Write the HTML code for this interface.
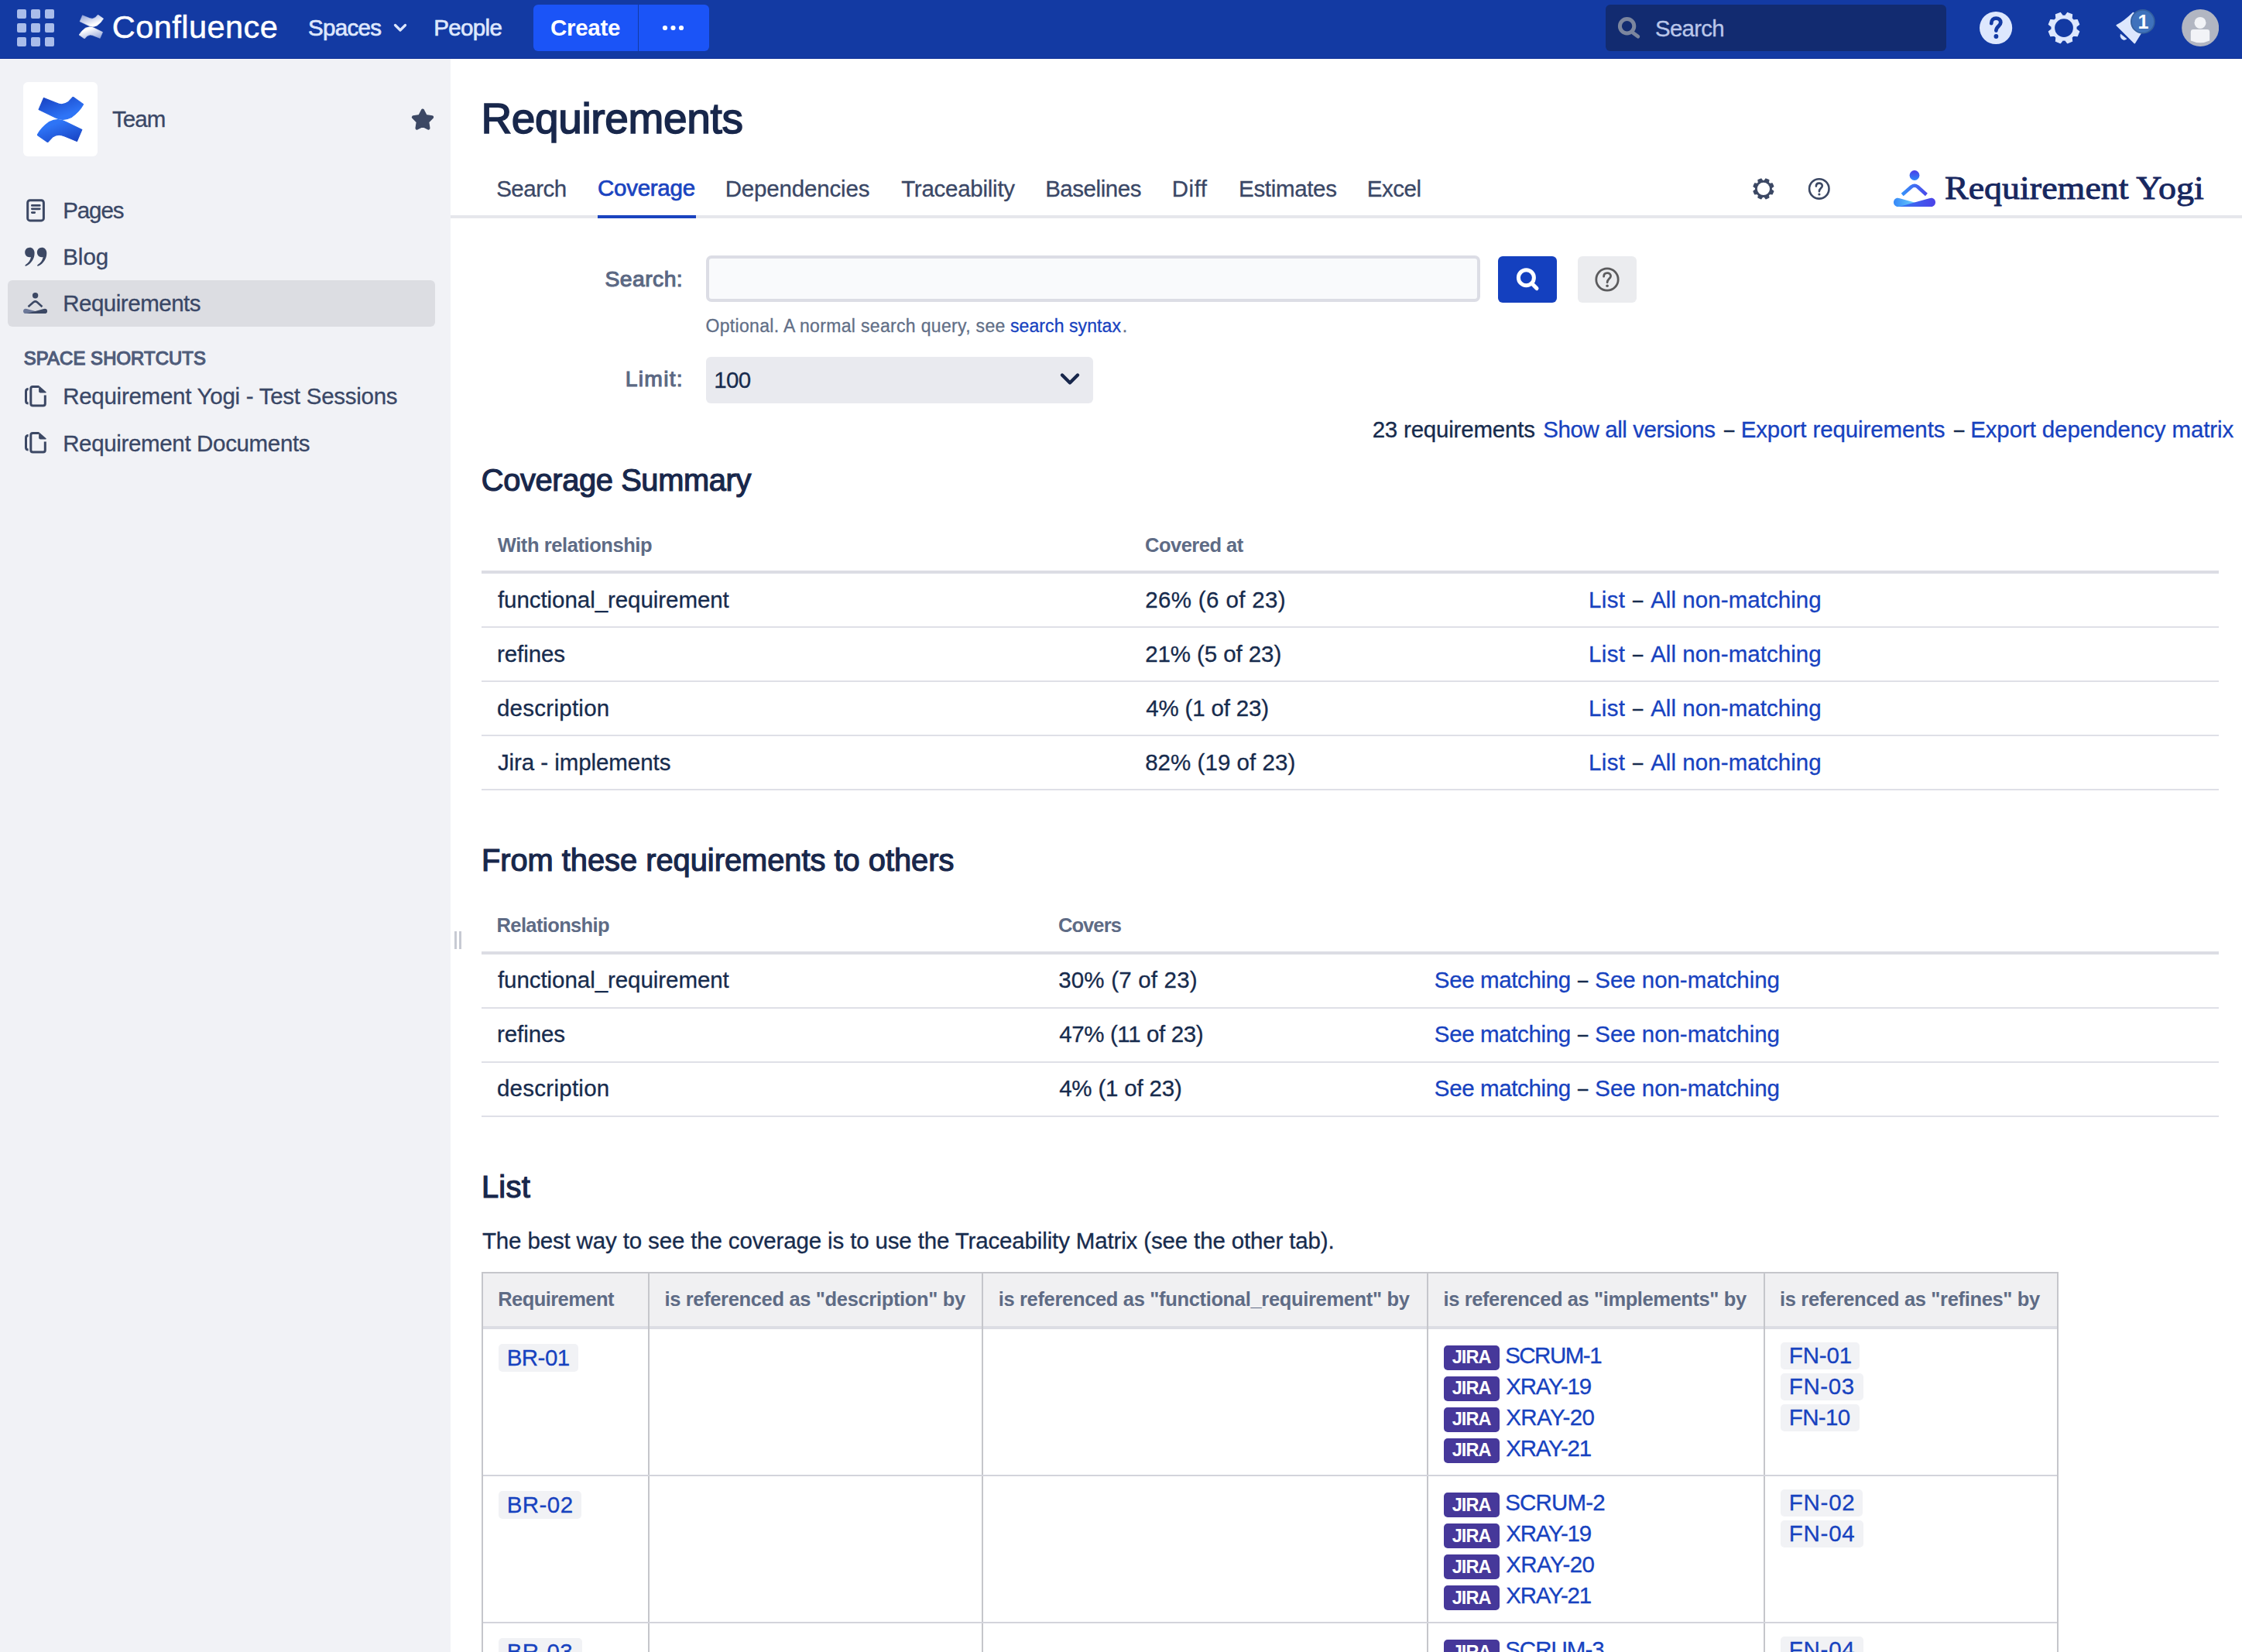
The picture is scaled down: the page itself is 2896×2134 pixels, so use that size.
<!DOCTYPE html>
<html lang="en"><head><meta charset="utf-8"><title>Requirements - Coverage - Confluence</title>
<style>
html,body{margin:0;padding:0;}
body{width:2896px;height:2134px;overflow:hidden;position:relative;background:#fff;font-family:"Liberation Sans",sans-serif;}
.b{position:absolute;box-sizing:border-box;display:block;}
.t{position:absolute;white-space:pre;line-height:1;margin:0;padding:0;font-weight:400;}
a{text-decoration:none;}
</style></head>
<body>
<div class="b" style="left:0px;top:0px;width:2896px;height:76px;background:#133AA3;border-bottom:1px solid #0B2C95;"></div>
<svg class="b" style="left:22px;top:12px;" width="48" height="48" viewBox="0 0 48 48"><rect x="0" y="0" width="12" height="12" rx="2" fill="#A9BCEA"/><rect x="18" y="0" width="12" height="12" rx="2" fill="#A9BCEA"/><rect x="36" y="0" width="12" height="12" rx="2" fill="#A9BCEA"/><rect x="0" y="18" width="12" height="12" rx="2" fill="#A9BCEA"/><rect x="18" y="18" width="12" height="12" rx="2" fill="#A9BCEA"/><rect x="36" y="18" width="12" height="12" rx="2" fill="#A9BCEA"/><rect x="0" y="36" width="12" height="12" rx="2" fill="#A9BCEA"/><rect x="18" y="36" width="12" height="12" rx="2" fill="#A9BCEA"/><rect x="36" y="36" width="12" height="12" rx="2" fill="#A9BCEA"/></svg>
<svg class="b" style="left:101.8px;top:18.9px;" width="32.0" height="31.4" viewBox="0 0 32 31.4"><defs><linearGradient id="cla" x1="0.05" y1="0" x2="0.62" y2="0.8"><stop offset="0" stop-color="#8B9ED6"/><stop offset="1" stop-color="#FFFFFF"/></linearGradient><linearGradient id="clb" x1="0.9" y1="1" x2="0.25" y2="0.15"><stop offset="0" stop-color="#8B9ED6"/><stop offset="1" stop-color="#FFFFFF"/></linearGradient></defs><path d="M4.5,0.8 L13.2,4.3 Q17.5,6.3 21.2,3.6 L24.5,0.1 L31.6,5.1 Q29,10 23.4,14 Q17.5,17 12.3,14.1 L1.1,8.7 Z" fill="url(#cla)" stroke="url(#cla)" stroke-width="0.6" stroke-linejoin="round"/><path d="M4.5,0.8 L13.2,4.3 Q17.5,6.3 21.2,3.6 L24.5,0.1 L31.6,5.1 Q29,10 23.4,14 Q17.5,17 12.3,14.1 L1.1,8.7 Z" transform="rotate(180 15.85 15.6)" fill="url(#cla)" stroke="url(#cla)" stroke-width="0.6" stroke-linejoin="round"/></svg>
<svg class="b" style="left:507px;top:28px;" width="20" height="16" viewBox="0 0 20 16"><path d="M3.5,4.5 L10,11 L16.5,4.5" fill="none" stroke="#DEE7FC" stroke-width="3.2" stroke-linecap="round" stroke-linejoin="round"/></svg>
<div class="b" style="left:689px;top:6px;width:135px;height:60px;background:#1B54F7;border-radius:6px 0 0 6px;"></div>
<div class="b" style="left:825px;top:6px;width:91px;height:60px;background:#1B54F7;border-radius:0 6px 6px 0;"></div>
<svg class="b" style="left:853px;top:30px;" width="34" height="12" viewBox="0 0 34 12"><circle cx="6" cy="6" r="3.1" fill="#fff"/><circle cx="16.5" cy="6" r="3.1" fill="#fff"/><circle cx="27" cy="6" r="3.1" fill="#fff"/></svg>
<div class="b" style="left:2074px;top:6px;width:440px;height:60px;background:#122B70;border-radius:6px;"></div>
<svg class="b" style="left:2086px;top:18px;" width="36" height="36" viewBox="0 0 36 36"><circle cx="15.6" cy="15.7" r="9.2" fill="none" stroke="#7C869E" stroke-width="5"/><path d="M23.3,24.3 L29.8,29.2" stroke="#7C869E" stroke-width="4.8" stroke-linecap="round"/></svg>
<svg class="b" style="left:2556px;top:14px;" width="44" height="44" viewBox="0 0 44 44"><circle cx="22.1" cy="22" r="21.1" fill="#DDE7FD"/><path d="M16.2,16.2 C16.2,11.5 19,9.6 22.3,9.6 C25.8,9.6 28.3,11.8 28.3,15 C28.3,19.5 22.4,20 22.4,25.6" fill="none" stroke="#133AA3" stroke-width="4.8" stroke-linecap="round"/><circle cx="22.4" cy="33" r="2.9" fill="#133AA3"/></svg>
<svg class="b" style="left:2644px;top:14px;" width="44" height="44" viewBox="0 0 44 44"><path d="M23.63,6.28 L26.66,2.44 L32.60,4.91 L32.03,9.76 L34.34,12.07 L39.19,11.50 L41.66,17.44 L37.82,20.47 L37.82,23.73 L41.66,26.76 L39.19,32.70 L34.34,32.13 L32.03,34.44 L32.60,39.29 L26.66,41.76 L23.63,37.92 L20.37,37.92 L17.34,41.76 L11.40,39.29 L11.97,34.44 L9.66,32.13 L4.81,32.70 L2.34,26.76 L6.18,23.73 L6.18,20.47 L2.34,17.44 L4.81,11.50 L9.66,12.07 L11.97,9.76 L11.40,4.91 L17.34,2.44 L20.37,6.28Z" fill="#DDE7FD" stroke="#DDE7FD" stroke-width="1.2" stroke-linejoin="round"/><circle cx="22" cy="22.1" r="16.2" fill="#DDE7FD"/><circle cx="22" cy="22.1" r="11.9" fill="#133AA3"/></svg>
<svg class="b" style="left:2728px;top:8px;" width="64" height="60" viewBox="0 0 64 60"><path d="M6.2,24.8 Q16,19.8 27.5,8.5 L42,27 L29.3,47.6 Z" fill="#DDE7FD" stroke="#DDE7FD" stroke-width="1.6" stroke-linejoin="round"/><path d="M11.3,36.2 L18.9,42.3 Q15,44.8 12.5,42 Q10.2,39.2 11.3,36.2 Z" fill="#DDE7FD" stroke="#DDE7FD" stroke-width="0.8" stroke-linejoin="round"/><circle cx="39.85" cy="19.9" r="15" fill="#3F72BC" stroke="#35619F" stroke-width="1.7"/></svg>
<svg class="b" style="left:2818px;top:12px;" width="48" height="48" viewBox="0 0 48 48"><defs><clipPath id="avc"><circle cx="24.2" cy="24" r="24"/></clipPath></defs><circle cx="24.2" cy="24" r="24" fill="#B2B6C2"/><g clip-path="url(#avc)"><circle cx="24" cy="17.4" r="7.5" fill="#F2F3F7"/><path d="M11.8,29.5 Q11.8,26.1 15.2,26.1 L32.8,26.1 Q36.2,26.1 36.2,29.5 L36.2,40.5 Q24,46 11.8,40.5 Z" fill="#F2F3F7"/></g></svg>
<div class="b" style="left:0px;top:76px;width:582px;height:2058px;background:#F1F2F6;"></div>
<div class="b" style="left:30px;top:106px;width:96px;height:96px;background:#FFFFFF;border-radius:6px;"></div>
<svg class="b" style="left:48px;top:124.5px;" width="60.48" height="59.35" viewBox="0 0 32 31.4"><defs><linearGradient id="csa" x1="0.05" y1="0" x2="0.62" y2="0.8"><stop offset="0" stop-color="#1740C0"/><stop offset="1" stop-color="#2E74F6"/></linearGradient><linearGradient id="csb" x1="0.9" y1="1" x2="0.25" y2="0.15"><stop offset="0" stop-color="#1740C0"/><stop offset="1" stop-color="#2E74F6"/></linearGradient></defs><path d="M4.5,0.8 L13.2,4.3 Q17.5,6.3 21.2,3.6 L24.5,0.1 L31.6,5.1 Q29,10 23.4,14 Q17.5,17 12.3,14.1 L1.1,8.7 Z" fill="url(#csa)" stroke="url(#csa)" stroke-width="0.6" stroke-linejoin="round"/><path d="M4.5,0.8 L13.2,4.3 Q17.5,6.3 21.2,3.6 L24.5,0.1 L31.6,5.1 Q29,10 23.4,14 Q17.5,17 12.3,14.1 L1.1,8.7 Z" transform="rotate(180 15.85 15.6)" fill="url(#csa)" stroke="url(#csa)" stroke-width="0.6" stroke-linejoin="round"/></svg>
<svg class="b" style="left:528px;top:136px;" width="36" height="36" viewBox="0 0 36 36"><polygon points="18.00,6.50 21.88,13.96 30.17,15.34 24.28,21.34 25.52,29.66 18.00,25.90 10.48,29.66 11.72,21.34 5.83,15.34 14.12,13.96" fill="#3C4864" stroke="#3C4864" stroke-width="4" stroke-linejoin="round"/></svg>
<svg class="b" style="left:32px;top:255px;" width="28" height="34" viewBox="0 0 28 34"><rect x="3.7" y="3.7" width="20.7" height="26.2" rx="3" fill="none" stroke="#3C4864" stroke-width="3"/><path d="M9.3,10.4 H19.3 M9.3,14.8 H19.3 M9.3,19.6 H12.8" stroke="#3C4864" stroke-width="2.7" stroke-linecap="round"/></svg>
<svg class="b" style="left:30px;top:318px;" width="34" height="28" viewBox="0 0 34 28"><path d="M6.3,0 C9.9,0 12.6,2.7 12.6,7.2 C12.6,14.5 8.5,20.5 2,23.8 C0.7,24.4 -0.2,22.8 1,22.1 C4.8,19.6 7.2,16.6 8,12.2 C7.5,12.4 6.9,12.5 6.3,12.5 C2.8,12.5 0.2,9.8 0.2,6.3 C0.2,2.8 2.8,0 6.3,0 Z" transform="translate(2,1.8)" fill="#3C4864"/><path d="M6.3,0 C9.9,0 12.6,2.7 12.6,7.2 C12.6,14.5 8.5,20.5 2,23.8 C0.7,24.4 -0.2,22.8 1,22.1 C4.8,19.6 7.2,16.6 8,12.2 C7.5,12.4 6.9,12.5 6.3,12.5 C2.8,12.5 0.2,9.8 0.2,6.3 C0.2,2.8 2.8,0 6.3,0 Z" transform="translate(17.7,1.8)" fill="#3C4864"/></svg>
<div class="b" style="left:10px;top:362px;width:552px;height:60px;background:#DCDDE2;border-radius:6px;"></div>
<svg class="b" style="left:30px;top:377.7px;" width="31.21" height="27.17" viewBox="0 0 54 47"><circle cx="27" cy="6.5" r="6.4" fill="#3C4864"/><path d="M11.2,31.5 L23,21.3 Q27,18.3 31,21.3 L42.4,31.5" fill="none" stroke="#3C4864" stroke-width="4.5" stroke-linejoin="round"/><path d="M5.5,35.8 C2,35.8 0,38.5 0,41.4 C0,44.3 2.3,46.9 5.5,46.9 L47,46.9 L8,36.2 Q6.5,35.8 5.5,35.8 Z" fill="#6C7898"/><path d="M48.5,35.8 C52,35.8 54,38.5 54,41.4 C54,44.3 51.7,46.9 48.5,46.9 L7,46.9 L46,36.2 Q47.5,35.8 48.5,35.8 Z" fill="#3C4864"/></svg>
<svg class="b" style="left:30px;top:496.5px;" width="32" height="32" viewBox="0 0 32 32"><path d="M20,2.5 H12.3 Q9.8,2.5 9.8,5 V24.6 Q9.8,27.1 12.3,27.1 H25.8 Q28.3,27.1 28.3,24.6 V13.5" fill="none" stroke="#3C4864" stroke-width="3" stroke-linejoin="round"/><path d="M20.1,1 L29.8,9.6 Q29.8,10.5 28.9,10.5 H22.3 Q20.1,10.5 20.1,8.3 Z" fill="#3C4864"/><path d="M6.6,5.6 Q3.5,5.6 3.5,8.7 V20.9 Q3.5,24 6.6,24" fill="none" stroke="#3C4864" stroke-width="3"/></svg>
<svg class="b" style="left:30px;top:556.5px;" width="32" height="32" viewBox="0 0 32 32"><path d="M20,2.5 H12.3 Q9.8,2.5 9.8,5 V24.6 Q9.8,27.1 12.3,27.1 H25.8 Q28.3,27.1 28.3,24.6 V13.5" fill="none" stroke="#3C4864" stroke-width="3" stroke-linejoin="round"/><path d="M20.1,1 L29.8,9.6 Q29.8,10.5 28.9,10.5 H22.3 Q20.1,10.5 20.1,8.3 Z" fill="#3C4864"/><path d="M6.6,5.6 Q3.5,5.6 3.5,8.7 V20.9 Q3.5,24 6.6,24" fill="none" stroke="#3C4864" stroke-width="3"/></svg>
<div class="b" style="left:587px;top:1203px;width:3px;height:23px;background:#C7CAD3;"></div>
<div class="b" style="left:593px;top:1203px;width:3px;height:23px;background:#C7CAD3;"></div>
<div class="b" style="left:582px;top:278px;width:2314px;height:4px;background:#E6E7EC;"></div>
<div class="b" style="left:772px;top:278px;width:127px;height:4px;background:#1A43BF;"></div>
<svg class="b" style="left:2262px;top:228px;" width="32" height="32" viewBox="0 0 32 32"><path d="M16.96,5.65 L18.97,2.96 L22.88,4.58 L22.40,7.91 L23.89,9.40 L27.22,8.92 L28.84,12.83 L26.15,14.84 L26.15,16.96 L28.84,18.97 L27.22,22.88 L23.89,22.40 L22.40,23.89 L22.88,27.22 L18.97,28.84 L16.96,26.15 L14.84,26.15 L12.83,28.84 L8.92,27.22 L9.40,23.89 L7.91,22.40 L4.58,22.88 L2.96,18.97 L5.65,16.96 L5.65,14.84 L2.96,12.83 L4.58,8.92 L7.91,9.40 L9.40,7.91 L8.92,4.58 L12.83,2.96 L14.84,5.65Z" fill="#3C4864" stroke="#3C4864" stroke-width="1.2" stroke-linejoin="round"/><circle cx="15.9" cy="15.9" r="10.6" fill="#3C4864"/><circle cx="15.9" cy="15.9" r="8.1" fill="#FFFFFF"/></svg>
<svg class="b" style="left:2334px;top:228px;" width="32" height="32" viewBox="0 0 32 32"><circle cx="15.8" cy="15.9" r="12.7" fill="none" stroke="#3C4864" stroke-width="2.6"/><path d="M11.9,12.6 C11.9,9.8 13.8,8.6 15.9,8.6 C18.1,8.6 19.8,10 19.8,12 C19.8,14.9 15.9,15.3 15.9,19.2" fill="none" stroke="#3C4864" stroke-width="2.6" stroke-linecap="round"/><circle cx="15.9" cy="23" r="1.6" fill="#3C4864"/></svg>
<svg class="b" style="left:2446px;top:220px;" width="54.0" height="47.0" viewBox="0 0 54 47"><defs><linearGradient id="ylh" x1="0" y1="0" x2="0" y2="1"><stop offset="0" stop-color="#4B3DE8"/><stop offset="1" stop-color="#2E86F8"/></linearGradient><linearGradient id="yla" x1="0" y1="0" x2="1" y2="0"><stop offset="0" stop-color="#3691F9"/><stop offset="1" stop-color="#4B4AEA"/></linearGradient><linearGradient id="yll" x1="0" y1="0" x2="1" y2="0"><stop offset="0" stop-color="#3587F8"/><stop offset="0.75" stop-color="#7BE3FC"/></linearGradient><linearGradient id="ylr" x1="0" y1="0" x2="1" y2="0"><stop offset="0" stop-color="#3578F4"/><stop offset="1" stop-color="#4C42E8"/></linearGradient></defs><circle cx="27" cy="6.5" r="6.4" fill="url(#ylh)"/><path d="M11.2,31.5 L23,21.3 Q27,18.3 31,21.3 L42.4,31.5" fill="none" stroke="url(#yla)" stroke-width="4.5" stroke-linejoin="round"/><path d="M5.5,35.8 C2,35.8 0,38.5 0,41.4 C0,44.3 2.3,46.9 5.5,46.9 L47,46.9 L8,36.2 Q6.5,35.8 5.5,35.8 Z" fill="url(#yll)"/><path d="M48.5,35.8 C52,35.8 54,38.5 54,41.4 C54,44.3 51.7,46.9 48.5,46.9 L7,46.9 L46,36.2 Q47.5,35.8 48.5,35.8 Z" fill="url(#ylr)"/></svg>
<div class="b" style="left:912px;top:330px;width:1000px;height:60px;background:#F9FAFC;border-radius:7px;border:4px solid #DCDDE5;"></div>
<div class="b" style="left:1935px;top:331px;width:76px;height:60px;background:#1440BF;border-radius:6px;"></div>
<svg class="b" style="left:1955px;top:343px;" width="36" height="36" viewBox="0 0 36 36"><circle cx="16.4" cy="15.7" r="10" fill="none" stroke="#fff" stroke-width="5"/><path d="M23.8,23.2 L30,29.6" stroke="#fff" stroke-width="5" stroke-linecap="round"/></svg>
<div class="b" style="left:2038px;top:331px;width:76px;height:60px;background:#EBECEF;border-radius:6px;"></div>
<svg class="b" style="left:2058px;top:343px;" width="36" height="36" viewBox="0 0 36 36"><circle cx="18" cy="18" r="14.2" fill="none" stroke="#5B5B5D" stroke-width="2.8"/><path d="M13.6,14.2 C13.6,11 15.7,9.6 18.1,9.6 C20.7,9.6 22.6,11.2 22.6,13.5 C22.6,16.9 18.1,17.4 18.1,21.8" fill="none" stroke="#5B5B5D" stroke-width="2.8" stroke-linecap="round"/><circle cx="18.1" cy="26.2" r="1.8" fill="#5B5B5D"/></svg>
<div class="b" style="left:912px;top:461px;width:500px;height:60px;background:#E9EAEF;border-radius:6px;"></div>
<svg class="b" style="left:1366px;top:478px;" width="32" height="24" viewBox="0 0 32 24"><path d="M6,6.5 L16,16.5 L26,6.5" fill="none" stroke="#18274B" stroke-width="4.4" stroke-linecap="round" stroke-linejoin="round"/></svg>
<div class="b" style="left:622px;top:737px;width:2244px;height:4px;background:#DCDDE4;"></div>
<div class="b" style="left:622px;top:809px;width:2244px;height:2px;background:#DFE0E7;"></div>
<div class="b" style="left:622px;top:879px;width:2244px;height:2px;background:#DFE0E7;"></div>
<div class="b" style="left:622px;top:949px;width:2244px;height:2px;background:#DFE0E7;"></div>
<div class="b" style="left:622px;top:1019px;width:2244px;height:2px;background:#DFE0E7;"></div>
<div class="b" style="left:622px;top:1229px;width:2244px;height:4px;background:#DCDDE4;"></div>
<div class="b" style="left:622px;top:1301px;width:2244px;height:2px;background:#DFE0E7;"></div>
<div class="b" style="left:622px;top:1371px;width:2244px;height:2px;background:#DFE0E7;"></div>
<div class="b" style="left:622px;top:1441px;width:2244px;height:2px;background:#DFE0E7;"></div>
<div class="b" style="left:622px;top:1643px;width:2037px;height:491px;background:#FFFFFF;border:2px solid #C5C6CB;border-bottom:none;"></div>
<div class="b" style="left:624px;top:1645px;width:2033px;height:68px;background:#F0F0F2;"></div>
<div class="b" style="left:624px;top:1713px;width:2033px;height:4px;background:#DCDDE4;"></div>
<div class="b" style="left:837px;top:1645px;width:2px;height:489px;background:#C5C6CB;"></div>
<div class="b" style="left:1268px;top:1645px;width:2px;height:489px;background:#C5C6CB;"></div>
<div class="b" style="left:1843px;top:1645px;width:2px;height:489px;background:#C5C6CB;"></div>
<div class="b" style="left:2278px;top:1645px;width:2px;height:489px;background:#C5C6CB;"></div>
<div class="b" style="left:624px;top:1905px;width:2033px;height:2px;background:#D3D4DB;"></div>
<div class="b" style="left:624px;top:2095px;width:2033px;height:2px;background:#D3D4DB;"></div>
<div class="b" style="left:644px;top:1736px;width:103px;height:35.5px;background:#F1F2F5;border-radius:5px;"></div>
<div class="b" style="left:644px;top:1926px;width:106.6px;height:35.5px;background:#F1F2F5;border-radius:5px;"></div>
<div class="b" style="left:644px;top:2116px;width:107.5px;height:35.5px;background:#F1F2F5;border-radius:5px;"></div>
<div class="b" style="left:1865px;top:1738px;width:72px;height:32px;background:#46389A;border-radius:5px;"></div>
<div class="b" style="left:1865px;top:1778px;width:72px;height:32px;background:#46389A;border-radius:5px;"></div>
<div class="b" style="left:1865px;top:1818px;width:72px;height:32px;background:#46389A;border-radius:5px;"></div>
<div class="b" style="left:1865px;top:1858px;width:72px;height:32px;background:#46389A;border-radius:5px;"></div>
<div class="b" style="left:1865px;top:1928.3px;width:72px;height:32px;background:#46389A;border-radius:5px;"></div>
<div class="b" style="left:1865px;top:1968.3px;width:72px;height:32px;background:#46389A;border-radius:5px;"></div>
<div class="b" style="left:1865px;top:2008.3px;width:72px;height:32px;background:#46389A;border-radius:5px;"></div>
<div class="b" style="left:1865px;top:2048.3px;width:72px;height:32px;background:#46389A;border-radius:5px;"></div>
<div class="b" style="left:1865px;top:2118.3px;width:72px;height:32px;background:#46389A;border-radius:5px;"></div>
<div class="b" style="left:2300px;top:1733.5px;width:102px;height:35px;background:#F1F2F5;border-radius:5px;"></div>
<div class="b" style="left:2300px;top:1773.5px;width:107px;height:35px;background:#F1F2F5;border-radius:5px;"></div>
<div class="b" style="left:2300px;top:1813.5px;width:102px;height:35px;background:#F1F2F5;border-radius:5px;"></div>
<div class="b" style="left:2300px;top:1923.5px;width:106px;height:35px;background:#F1F2F5;border-radius:5px;"></div>
<div class="b" style="left:2300px;top:1963.5px;width:107px;height:35px;background:#F1F2F5;border-radius:5px;"></div>
<div class="b" style="left:2300px;top:2113.5px;width:107px;height:35px;background:#F1F2F5;border-radius:5px;"></div>
<span class="t" style="left:144.75px;top:14px;font-size:41.5px;color:#FFFFFF;letter-spacing:0.459px;-webkit-text-stroke:0.5px #FFFFFF;">Confluence</span>
<span class="t" style="left:398.10px;top:21px;font-size:29.5px;color:#DEE7FC;letter-spacing:-0.721px;-webkit-text-stroke:0.7px #DEE7FC;">Spaces</span>
<span class="t" style="left:560.35px;top:21px;font-size:29.5px;color:#DEE7FC;letter-spacing:-0.681px;-webkit-text-stroke:0.7px #DEE7FC;">People</span>
<span class="t" style="left:711.00px;top:21px;font-size:29.5px;color:#FFFFFF;font-weight:700;letter-spacing:-0.284px;">Create</span>
<span class="t" style="left:2138.05px;top:22px;font-size:29.5px;color:#BAC6E9;letter-spacing:-0.776px;-webkit-text-stroke:0.3px #BAC6E9;">Search</span>
<span class="t" style="left:2761.60px;top:16px;font-size:25px;color:#FFFFFF;font-weight:700;">1</span>
<span class="t" style="left:144.95px;top:139px;font-size:29.5px;color:#3A4766;letter-spacing:-0.889px;-webkit-text-stroke:0.3px #3A4766;">Team</span>
<span class="t" style="left:81.15px;top:257px;font-size:29.5px;color:#3A4766;letter-spacing:-1.052px;-webkit-text-stroke:0.3px #3A4766;">Pages</span>
<span class="t" style="left:81.15px;top:317px;font-size:29.5px;color:#3A4766;letter-spacing:0.020px;-webkit-text-stroke:0.3px #3A4766;">Blog</span>
<span class="t" style="left:81.15px;top:377px;font-size:29.5px;color:#3A4766;letter-spacing:-0.472px;-webkit-text-stroke:0.3px #3A4766;">Requirements</span>
<span class="t" style="left:30.82px;top:451px;font-size:23.8px;color:#4F5C7A;letter-spacing:0.132px;-webkit-text-stroke:1.25px #4F5C7A;">SPACE SHORTCUTS</span>
<span class="t" style="left:81.15px;top:497px;font-size:29.5px;color:#3A4766;letter-spacing:-0.262px;-webkit-text-stroke:0.3px #3A4766;">Requirement Yogi - Test Sessions</span>
<span class="t" style="left:81.15px;top:558px;font-size:29.5px;color:#3A4766;letter-spacing:-0.342px;-webkit-text-stroke:0.3px #3A4766;">Requirement Documents</span>
<h1 class="t" style="left:621.40px;top:126px;font-size:55px;color:#18274B;letter-spacing:-0.354px;-webkit-text-stroke:1.6px #18274B;">Requirements</h1>
<a href="#" class="t" style="left:641.15px;top:229px;font-size:29.5px;color:#3A4766;letter-spacing:-0.476px;-webkit-text-stroke:0.3px #3A4766;">Search</a>
<a href="#" class="t" style="left:772.05px;top:228px;font-size:29.5px;color:#1A43BF;letter-spacing:-0.274px;-webkit-text-stroke:0.7px #1A43BF;">Coverage</a>
<a href="#" class="t" style="left:936.65px;top:229px;font-size:29.5px;color:#3A4766;letter-spacing:-0.170px;-webkit-text-stroke:0.3px #3A4766;">Dependencies</a>
<a href="#" class="t" style="left:1164.15px;top:229px;font-size:29.5px;color:#3A4766;letter-spacing:-0.253px;-webkit-text-stroke:0.3px #3A4766;">Traceability</a>
<a href="#" class="t" style="left:1350.15px;top:229px;font-size:29.5px;color:#3A4766;letter-spacing:-0.459px;-webkit-text-stroke:0.3px #3A4766;">Baselines</a>
<a href="#" class="t" style="left:1513.75px;top:229px;font-size:29.5px;color:#3A4766;letter-spacing:0.526px;-webkit-text-stroke:0.3px #3A4766;">Diff</a>
<a href="#" class="t" style="left:1600.05px;top:229px;font-size:29.5px;color:#3A4766;letter-spacing:-0.333px;-webkit-text-stroke:0.3px #3A4766;">Estimates</a>
<a href="#" class="t" style="left:1765.85px;top:229px;font-size:29.5px;color:#3A4766;letter-spacing:-0.472px;-webkit-text-stroke:0.3px #3A4766;">Excel</a>
<span class="t" style="left:2511.70px;top:222px;font-size:42.5px;color:#17275F;font-family:'Liberation Serif',serif;transform:scaleX(1.0823);transform-origin:0 0;-webkit-text-stroke:0.9px #17275F;">Requirement Yogi</span>
<span class="t" style="left:781.45px;top:346px;font-size:28.3px;color:#5B6883;letter-spacing:0.455px;-webkit-text-stroke:1.1px #5B6883;">Search:</span>
<span class="t" style="left:911.45px;top:410px;font-size:23px;color:#626F87;letter-spacing:0.327px;-webkit-text-stroke:0.3px #626F87;">Optional. A normal search query, see</span>
<a href="#" class="t" style="left:1304.95px;top:410px;font-size:23px;color:#1742BF;letter-spacing:0.091px;-webkit-text-stroke:0.3px #1742BF;">search syntax</a>
<span class="t" style="left:1449.65px;top:410px;font-size:23px;color:#626F87;-webkit-text-stroke:0.3px #626F87;">.</span>
<span class="t" style="left:807.75px;top:475px;font-size:28.3px;color:#5B6883;letter-spacing:1.270px;-webkit-text-stroke:1.1px #5B6883;">Limit:</span>
<span class="t" style="left:922.15px;top:476px;font-size:29.5px;color:#172B4D;letter-spacing:-0.564px;-webkit-text-stroke:0.3px #172B4D;">100</span>
<span class="t" style="left:1772.65px;top:540px;font-size:29.5px;color:#172B4D;letter-spacing:-0.209px;-webkit-text-stroke:0.3px #172B4D;">23 requirements</span>
<a href="#" class="t" style="left:1993.35px;top:540px;font-size:29.5px;color:#1742BF;letter-spacing:-0.431px;-webkit-text-stroke:0.3px #1742BF;">Show all versions</a>
<span class="t" style="left:2227.12px;top:540px;font-size:29.5px;color:#172B4D;transform:scaleX(0.8085);transform-origin:0 0;-webkit-text-stroke:0.3px #172B4D;">–</span>
<a href="#" class="t" style="left:2248.65px;top:540px;font-size:29.5px;color:#1742BF;letter-spacing:-0.099px;-webkit-text-stroke:0.3px #1742BF;">Export requirements</a>
<span class="t" style="left:2523.92px;top:540px;font-size:29.5px;color:#172B4D;transform:scaleX(0.8085);transform-origin:0 0;-webkit-text-stroke:0.3px #172B4D;">–</span>
<a href="#" class="t" style="left:2545.15px;top:540px;font-size:29.5px;color:#1742BF;letter-spacing:-0.112px;-webkit-text-stroke:0.3px #1742BF;">Export dependency matrix</a>
<h2 class="t" style="left:621.80px;top:601px;font-size:39.8px;color:#18274B;letter-spacing:-0.359px;-webkit-text-stroke:1.2px #18274B;">Coverage Summary</h2>
<span class="t" style="left:642.80px;top:692px;font-size:25.5px;color:#5E6B85;font-weight:700;letter-spacing:-0.427px;">With relationship</span>
<span class="t" style="left:1479.00px;top:692px;font-size:25.5px;color:#5E6B85;font-weight:700;letter-spacing:-0.501px;">Covered at</span>
<span class="t" style="left:642.95px;top:760px;font-size:29.5px;color:#172B4D;letter-spacing:-0.058px;-webkit-text-stroke:0.3px #172B4D;">functional_requirement</span>
<span class="t" style="left:1479.15px;top:760px;font-size:29.5px;color:#172B4D;letter-spacing:0.368px;-webkit-text-stroke:0.3px #172B4D;">26% (6 of 23)</span>
<a href="#" class="t" style="left:2052.05px;top:760px;font-size:29.5px;color:#1742BF;letter-spacing:0.358px;-webkit-text-stroke:0.3px #1742BF;">List</a>
<span class="t" style="left:2108.62px;top:760px;font-size:29.5px;color:#172B4D;transform:scaleX(0.8085);transform-origin:0 0;-webkit-text-stroke:0.3px #172B4D;">–</span>
<a href="#" class="t" style="left:2132.15px;top:760px;font-size:29.5px;color:#1742BF;letter-spacing:0.058px;-webkit-text-stroke:0.3px #1742BF;">All non-matching</a>
<span class="t" style="left:641.95px;top:830px;font-size:29.5px;color:#172B4D;letter-spacing:-0.066px;-webkit-text-stroke:0.3px #172B4D;">refines</span>
<span class="t" style="left:1479.15px;top:830px;font-size:29.5px;color:#172B4D;letter-spacing:-0.082px;-webkit-text-stroke:0.3px #172B4D;">21% (5 of 23)</span>
<a href="#" class="t" style="left:2052.05px;top:830px;font-size:29.5px;color:#1742BF;letter-spacing:0.358px;-webkit-text-stroke:0.3px #1742BF;">List</a>
<span class="t" style="left:2108.62px;top:830px;font-size:29.5px;color:#172B4D;transform:scaleX(0.8085);transform-origin:0 0;-webkit-text-stroke:0.3px #172B4D;">–</span>
<a href="#" class="t" style="left:2132.15px;top:830px;font-size:29.5px;color:#1742BF;letter-spacing:0.058px;-webkit-text-stroke:0.3px #1742BF;">All non-matching</a>
<span class="t" style="left:641.95px;top:900px;font-size:29.5px;color:#172B4D;letter-spacing:0.263px;-webkit-text-stroke:0.3px #172B4D;">description</span>
<span class="t" style="left:1480.15px;top:900px;font-size:29.5px;color:#172B4D;letter-spacing:-0.153px;-webkit-text-stroke:0.3px #172B4D;">4% (1 of 23)</span>
<a href="#" class="t" style="left:2052.05px;top:900px;font-size:29.5px;color:#1742BF;letter-spacing:0.358px;-webkit-text-stroke:0.3px #1742BF;">List</a>
<span class="t" style="left:2108.62px;top:900px;font-size:29.5px;color:#172B4D;transform:scaleX(0.8085);transform-origin:0 0;-webkit-text-stroke:0.3px #172B4D;">–</span>
<a href="#" class="t" style="left:2132.15px;top:900px;font-size:29.5px;color:#1742BF;letter-spacing:0.058px;-webkit-text-stroke:0.3px #1742BF;">All non-matching</a>
<span class="t" style="left:642.95px;top:970px;font-size:29.5px;color:#172B4D;letter-spacing:-0.071px;-webkit-text-stroke:0.3px #172B4D;">Jira - implements</span>
<span class="t" style="left:1479.15px;top:970px;font-size:29.5px;color:#172B4D;letter-spacing:0.047px;-webkit-text-stroke:0.3px #172B4D;">82% (19 of 23)</span>
<a href="#" class="t" style="left:2052.05px;top:970px;font-size:29.5px;color:#1742BF;letter-spacing:0.358px;-webkit-text-stroke:0.3px #1742BF;">List</a>
<span class="t" style="left:2108.62px;top:970px;font-size:29.5px;color:#172B4D;transform:scaleX(0.8085);transform-origin:0 0;-webkit-text-stroke:0.3px #172B4D;">–</span>
<a href="#" class="t" style="left:2132.15px;top:970px;font-size:29.5px;color:#1742BF;letter-spacing:0.058px;-webkit-text-stroke:0.3px #1742BF;">All non-matching</a>
<h2 class="t" style="left:621.90px;top:1092px;font-size:39.8px;color:#18274B;-webkit-text-stroke:1.2px #18274B;">From these requirements to others</h2>
<span class="t" style="left:641.60px;top:1183px;font-size:25.5px;color:#5E6B85;font-weight:700;letter-spacing:-0.640px;">Relationship</span>
<span class="t" style="left:1366.90px;top:1183px;font-size:25.5px;color:#5E6B85;font-weight:700;letter-spacing:-0.897px;">Covers</span>
<span class="t" style="left:642.95px;top:1251px;font-size:29.5px;color:#172B4D;letter-spacing:-0.058px;-webkit-text-stroke:0.3px #172B4D;">functional_requirement</span>
<span class="t" style="left:1367.15px;top:1251px;font-size:29.5px;color:#172B4D;letter-spacing:0.201px;-webkit-text-stroke:0.3px #172B4D;">30% (7 of 23)</span>
<a href="#" class="t" style="left:1852.85px;top:1251px;font-size:29.5px;color:#1742BF;letter-spacing:-0.371px;-webkit-text-stroke:0.3px #1742BF;">See matching</a>
<span class="t" style="left:2038.12px;top:1251px;font-size:29.5px;color:#172B4D;transform:scaleX(0.8085);transform-origin:0 0;-webkit-text-stroke:0.3px #172B4D;">–</span>
<a href="#" class="t" style="left:2060.35px;top:1251px;font-size:29.5px;color:#1742BF;letter-spacing:-0.055px;-webkit-text-stroke:0.3px #1742BF;">See non-matching</a>
<span class="t" style="left:641.95px;top:1321px;font-size:29.5px;color:#172B4D;letter-spacing:-0.066px;-webkit-text-stroke:0.3px #172B4D;">refines</span>
<span class="t" style="left:1368.15px;top:1321px;font-size:29.5px;color:#172B4D;letter-spacing:-0.370px;-webkit-text-stroke:0.3px #172B4D;">47% (11 of 23)</span>
<a href="#" class="t" style="left:1852.85px;top:1321px;font-size:29.5px;color:#1742BF;letter-spacing:-0.371px;-webkit-text-stroke:0.3px #1742BF;">See matching</a>
<span class="t" style="left:2038.12px;top:1321px;font-size:29.5px;color:#172B4D;transform:scaleX(0.8085);transform-origin:0 0;-webkit-text-stroke:0.3px #172B4D;">–</span>
<a href="#" class="t" style="left:2060.35px;top:1321px;font-size:29.5px;color:#1742BF;letter-spacing:-0.055px;-webkit-text-stroke:0.3px #1742BF;">See non-matching</a>
<span class="t" style="left:641.95px;top:1391px;font-size:29.5px;color:#172B4D;letter-spacing:0.263px;-webkit-text-stroke:0.3px #172B4D;">description</span>
<span class="t" style="left:1368.15px;top:1391px;font-size:29.5px;color:#172B4D;letter-spacing:-0.180px;-webkit-text-stroke:0.3px #172B4D;">4% (1 of 23)</span>
<a href="#" class="t" style="left:1852.85px;top:1391px;font-size:29.5px;color:#1742BF;letter-spacing:-0.371px;-webkit-text-stroke:0.3px #1742BF;">See matching</a>
<span class="t" style="left:2038.12px;top:1391px;font-size:29.5px;color:#172B4D;transform:scaleX(0.8085);transform-origin:0 0;-webkit-text-stroke:0.3px #172B4D;">–</span>
<a href="#" class="t" style="left:2060.35px;top:1391px;font-size:29.5px;color:#1742BF;letter-spacing:-0.055px;-webkit-text-stroke:0.3px #1742BF;">See non-matching</a>
<h2 class="t" style="left:621.90px;top:1514px;font-size:39.8px;color:#18274B;letter-spacing:0.340px;-webkit-text-stroke:1.2px #18274B;">List</h2>
<span class="t" style="left:622.95px;top:1588px;font-size:29.5px;color:#172B4D;letter-spacing:-0.146px;-webkit-text-stroke:0.3px #172B4D;">The best way to see the coverage is to use the Traceability Matrix (see the other tab).</span>
<span class="t" style="left:643.20px;top:1666px;font-size:25.5px;color:#5E6B85;font-weight:700;letter-spacing:-0.558px;">Requirement</span>
<span class="t" style="left:858.40px;top:1666px;font-size:25.5px;color:#5E6B85;font-weight:700;letter-spacing:-0.343px;">is referenced as "description" by</span>
<span class="t" style="left:1289.70px;top:1666px;font-size:25.5px;color:#5E6B85;font-weight:700;letter-spacing:-0.337px;">is referenced as "functional_requirement" by</span>
<span class="t" style="left:1864.60px;top:1666px;font-size:25.5px;color:#5E6B85;font-weight:700;letter-spacing:-0.404px;">is referenced as "implements" by</span>
<span class="t" style="left:2299.00px;top:1666px;font-size:25.5px;color:#5E6B85;font-weight:700;letter-spacing:-0.348px;">is referenced as "refines" by</span>
<a href="#" class="t" style="left:654.65px;top:1739px;font-size:29.5px;color:#1742BF;letter-spacing:-0.505px;-webkit-text-stroke:0.3px #1742BF;">BR-01</a>
<a href="#" class="t" style="left:654.65px;top:1929px;font-size:29.5px;color:#1742BF;letter-spacing:0.445px;-webkit-text-stroke:0.3px #1742BF;">BR-02</a>
<a href="#" class="t" style="left:654.65px;top:2119px;font-size:29.5px;color:#1742BF;letter-spacing:0.370px;-webkit-text-stroke:0.3px #1742BF;">BR-03</a>
<span class="t" style="left:1875.70px;top:1742px;font-size:23.5px;color:#FFFFFF;font-weight:700;letter-spacing:-0.925px;">JIRA</span>
<a href="#" class="t" style="left:1944.15px;top:1736px;font-size:29.5px;color:#1742BF;letter-spacing:-1.500px;-webkit-text-stroke:0.3px #1742BF;">SCRUM-1</a>
<span class="t" style="left:1875.70px;top:1782px;font-size:23.5px;color:#FFFFFF;font-weight:700;letter-spacing:-0.925px;">JIRA</span>
<a href="#" class="t" style="left:1945.15px;top:1776px;font-size:29.5px;color:#1742BF;letter-spacing:-1.162px;-webkit-text-stroke:0.3px #1742BF;">XRAY-19</a>
<span class="t" style="left:1875.70px;top:1822px;font-size:23.5px;color:#FFFFFF;font-weight:700;letter-spacing:-0.925px;">JIRA</span>
<a href="#" class="t" style="left:1945.15px;top:1816px;font-size:29.5px;color:#1742BF;letter-spacing:-0.545px;-webkit-text-stroke:0.3px #1742BF;">XRAY-20</a>
<span class="t" style="left:1875.70px;top:1862px;font-size:23.5px;color:#FFFFFF;font-weight:700;letter-spacing:-0.925px;">JIRA</span>
<a href="#" class="t" style="left:1945.15px;top:1856px;font-size:29.5px;color:#1742BF;letter-spacing:-1.162px;-webkit-text-stroke:0.3px #1742BF;">XRAY-21</a>
<span class="t" style="left:1875.70px;top:1933px;font-size:23.5px;color:#FFFFFF;font-weight:700;letter-spacing:-0.925px;">JIRA</span>
<a href="#" class="t" style="left:1944.15px;top:1926px;font-size:29.5px;color:#1742BF;letter-spacing:-0.800px;-webkit-text-stroke:0.3px #1742BF;">SCRUM-2</a>
<span class="t" style="left:1875.70px;top:1973px;font-size:23.5px;color:#FFFFFF;font-weight:700;letter-spacing:-0.925px;">JIRA</span>
<a href="#" class="t" style="left:1945.15px;top:1966px;font-size:29.5px;color:#1742BF;letter-spacing:-1.162px;-webkit-text-stroke:0.3px #1742BF;">XRAY-19</a>
<span class="t" style="left:1875.70px;top:2013px;font-size:23.5px;color:#FFFFFF;font-weight:700;letter-spacing:-0.925px;">JIRA</span>
<a href="#" class="t" style="left:1945.15px;top:2006px;font-size:29.5px;color:#1742BF;letter-spacing:-0.545px;-webkit-text-stroke:0.3px #1742BF;">XRAY-20</a>
<span class="t" style="left:1875.70px;top:2053px;font-size:23.5px;color:#FFFFFF;font-weight:700;letter-spacing:-0.925px;">JIRA</span>
<a href="#" class="t" style="left:1945.15px;top:2046px;font-size:29.5px;color:#1742BF;letter-spacing:-1.162px;-webkit-text-stroke:0.3px #1742BF;">XRAY-21</a>
<span class="t" style="left:1875.70px;top:2123px;font-size:23.5px;color:#FFFFFF;font-weight:700;letter-spacing:-0.925px;">JIRA</span>
<a href="#" class="t" style="left:1944.15px;top:2116px;font-size:29.5px;color:#1742BF;letter-spacing:-0.967px;-webkit-text-stroke:0.3px #1742BF;">SCRUM-3</a>
<a href="#" class="t" style="left:2310.75px;top:1736px;font-size:29.5px;color:#1742BF;letter-spacing:-0.116px;-webkit-text-stroke:0.3px #1742BF;">FN-01</a>
<a href="#" class="t" style="left:2310.75px;top:1776px;font-size:29.5px;color:#1742BF;letter-spacing:0.634px;-webkit-text-stroke:0.3px #1742BF;">FN-03</a>
<a href="#" class="t" style="left:2310.75px;top:1816px;font-size:29.5px;color:#1742BF;letter-spacing:-0.616px;-webkit-text-stroke:0.3px #1742BF;">FN-10</a>
<a href="#" class="t" style="left:2310.75px;top:1926px;font-size:29.5px;color:#1742BF;letter-spacing:0.759px;-webkit-text-stroke:0.3px #1742BF;">FN-02</a>
<a href="#" class="t" style="left:2310.75px;top:1966px;font-size:29.5px;color:#1742BF;letter-spacing:0.759px;-webkit-text-stroke:0.3px #1742BF;">FN-04</a>
<a href="#" class="t" style="left:2310.75px;top:2116px;font-size:29.5px;color:#1742BF;letter-spacing:0.759px;-webkit-text-stroke:0.3px #1742BF;">FN-04</a>
<script>(function(){var w=window.innerWidth;if(w&&Math.abs(w-2896)>2){document.body.style.zoom=w/2896;}})();</script>
</body></html>
